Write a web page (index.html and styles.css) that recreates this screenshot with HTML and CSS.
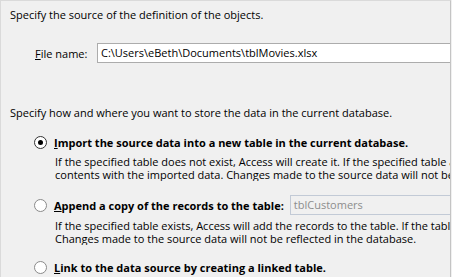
FILE: index.html
```html
<html>
<head>
<meta charset="UTF-8">
<title>Get External Data</title>
<link rel="stylesheet" href="styles.css">
</head>
<body>
<div class="frame">
    <p class="intro">Specify the source of the definition of the objects.</p>

    <div class="file-row">
        <label class="file-label"><u>F</u>ile name:</label>
        <div class="field">C:\Users\eBeth\Documents\tblMovies.xlsx</div>
    </div>

    <p class="intro intro-store">Specify how and where you want to store the data in the current database.</p>

    <div class="option option-first">
        <span class="radio checked"></span>
        <span class="option-text"><u>I</u>mport the source data into a new table in the current database.</span>
    </div>
    <div class="desc">
        <div>If the specified table does not exist, Access will create it. If the specified table already exists, Access might overwrite its</div>
        <div>contents with the imported data. Changes made to the source data will not be reflected in the database.</div>
    </div>

    <div class="option option-append">
        <span class="radio"></span>
        <span class="option-text"><u>A</u>ppend a copy of the records to the table:</span>
        <div class="field field-disabled">tblCustomers</div>
    </div>
    <div class="desc desc-append">
        <div>If the specified table exists, Access will add the records to the table. If the table does not exist, Access will create it.</div>
        <div>Changes made to the source data will not be reflected in the database.</div>
    </div>

    <div class="option option-link">
        <span class="radio"></span>
        <span class="option-text"><u>L</u>ink to the data source by creating a linked table.</span>
    </div>
</div>
</body>
</html>
```

FILE: styles.css
```css
body {
    margin: 0;
    width: 452px;
    height: 277px;
    overflow: hidden;
    background: #f0f0f0;
    font-family: "Open Sans", "Noto Sans", sans-serif;
    font-size: 11px;
    line-height: 13px;
    color: #000;
}
.frame {
    box-sizing: border-box;
    width: 451px;
    height: 277px;
    overflow: hidden;
    border-top: 1px solid #dadada;
    border-left: 1px solid #dadada;
    border-right: 1px solid #c4c4c4;
    padding: 7px 0 0 9px;
    white-space: nowrap;
}
.intro {
    margin: 0;
}
.intro-store {
    margin-top: 43px;
}
.file-row {
    display: flex;
    align-items: center;
    margin-top: 22px;
    padding-left: 25px;
}
.file-label {
    width: 62px;
    flex-shrink: 0;
}
.field {
    box-sizing: border-box;
    height: 20px;
    width: 420px;
    flex-shrink: 0;
    padding: 0 3px;
    line-height: 18px;
    font-weight: normal;
    background: #fff;
    border: 1px solid #acacac;
}
.field-disabled {
    width: 200px;
    margin-left: 6px;
    color: #8d8d8d;
    border-color: #c2cad6;
    background: #f0f0f0;
}
.option {
    display: flex;
    align-items: center;
    height: 15px;
    padding-left: 24px;
    font-weight: bold;
}
.option-first {
    margin-top: 16px;
}
.option-append {
    height: 20px;
    margin-top: 14px;
}
.option-link {
    margin-top: 15px;
}
.radio {
    box-sizing: border-box;
    position: relative;
    width: 13px;
    height: 13px;
    margin-right: 7px;
    border: 1px solid #8a8a8a;
    border-radius: 50%;
    background: #fff;
    flex-shrink: 0;
}
.radio.checked {
    border-color: #333;
}
.radio.checked:after {
    content: '';
    position: absolute;
    left: 3px;
    top: 3px;
    width: 5px;
    height: 5px;
    border-radius: 50%;
    background: #000;
}
.desc {
    margin-top: 5px;
    padding-left: 45px;
    overflow: hidden;
}
.desc-append {
    margin-top: 4px;
}
```
